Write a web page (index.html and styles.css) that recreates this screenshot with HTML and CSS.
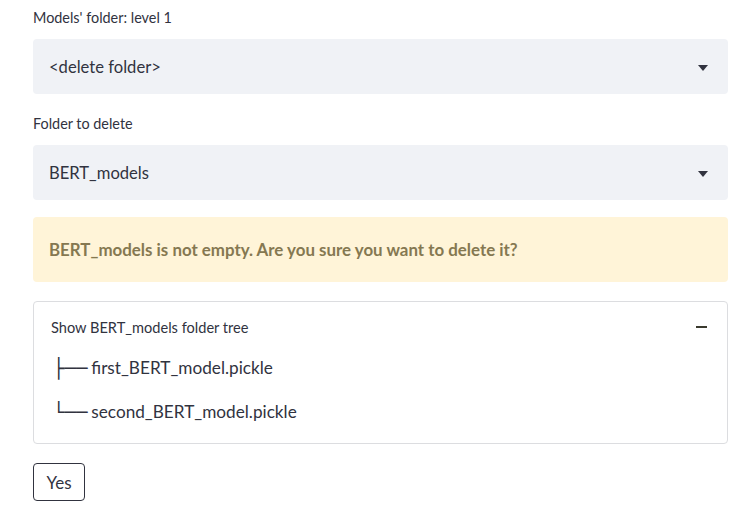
FILE: index.html
```html
<!DOCTYPE html>
<html>
<head>
<meta charset="utf-8">
<link rel="stylesheet" href="styles.css">
</head>
<body>
<main class="page">
  <div class="field-label">Models' folder: level 1</div>
  <div class="select">
    <span class="select-value">&lt;delete folder&gt;</span>
    <svg class="caret" width="10" height="6" viewBox="0 0 10 6"><path d="M0 0h10L5 6z" fill="#31333f"/></svg>
  </div>
  <div class="field-label second">Folder to delete</div>
  <div class="select">
    <span class="select-value">BERT_models</span>
    <svg class="caret" width="10" height="6" viewBox="0 0 10 6"><path d="M0 0h10L5 6z" fill="#31333f"/></svg>
  </div>
  <div class="warning">BERT_models is not empty. Are you sure you want to delete it?</div>
  <div class="expander">
    <div class="expander-header">
      <span>Show BERT_models folder tree</span>
      <span class="minus"></span>
    </div>
    <div class="tree">
      <div class="tree-row"><span class="branch">├──</span>first_BERT_model.pickle</div>
      <div class="tree-row"><span class="branch">└──</span>second_BERT_model.pickle</div>
    </div>
  </div>
  <button class="btn">Yes</button>
</main>
</body>
</html>
```

FILE: styles.css
```css
html, body {
  margin: 0;
  padding: 0;
  background: #ffffff;
}
body {
  font-family: "Lato", "Liberation Sans", sans-serif;
  color: #31333f;
}
.page {
  width: 695px;
  margin-left: 33px;
  display: flex;
  flex-direction: column;
  align-items: stretch;
}
.field-label {
  font-size: 14.4px;
  line-height: 20px;
  margin-top: 8px;
  margin-bottom: 11px;
}
.field-label.second {
  margin-top: 20px;
}
.select {
  height: 55px;
  background: #f0f2f6;
  border-radius: 4px;
  display: flex;
  align-items: center;
  justify-content: space-between;
  padding: 0 20px 0 16px;
}
.select-value {
  font-size: 16.6px;
}
.caret {
  display: block;
  margin-top: 2px;
}
.warning {
  margin-top: 17px;
  height: 65px;
  box-sizing: border-box;
  background: #fff4d8;
  border-radius: 4px;
  padding: 0 16px;
  display: flex;
  align-items: center;
  font-size: 16.9px;
  font-weight: 700;
  color: #857851;
}
.expander {
  margin-top: 19px;
  height: 143px;
  box-sizing: border-box;
  border: 1px solid #dcdde0;
  border-radius: 4px;
  padding: 0 20px 0 17px;
}
.expander-header {
  display: flex;
  align-items: center;
  justify-content: space-between;
  height: 20px;
  margin-top: 15px;
  font-size: 14.6px;
}
.minus {
  width: 11px;
  height: 2px;
  background: #3a3a2e;
  margin-right: 0;
}
.tree {
  margin-top: 20px;
  padding-left: 2px;
  display: flex;
  flex-direction: column;
  gap: 22px;
}
.tree-row {
  font-size: 17.2px;
  line-height: 22px;
  display: flex;
  align-items: center;
}
.branch {
  font-family: "DejaVu Sans", sans-serif;
  font-size: 19px;
  line-height: 22px;
  margin-right: 4px;
}
.btn {
  align-self: flex-start;
  margin-top: 19px;
  height: 38px;
  width: 52px;
  padding: 0;
  background: #ffffff;
  border: 1px solid #31333f;
  border-radius: 4px;
  font-family: inherit;
  font-size: 17px;
  color: #31333f;
}
```
